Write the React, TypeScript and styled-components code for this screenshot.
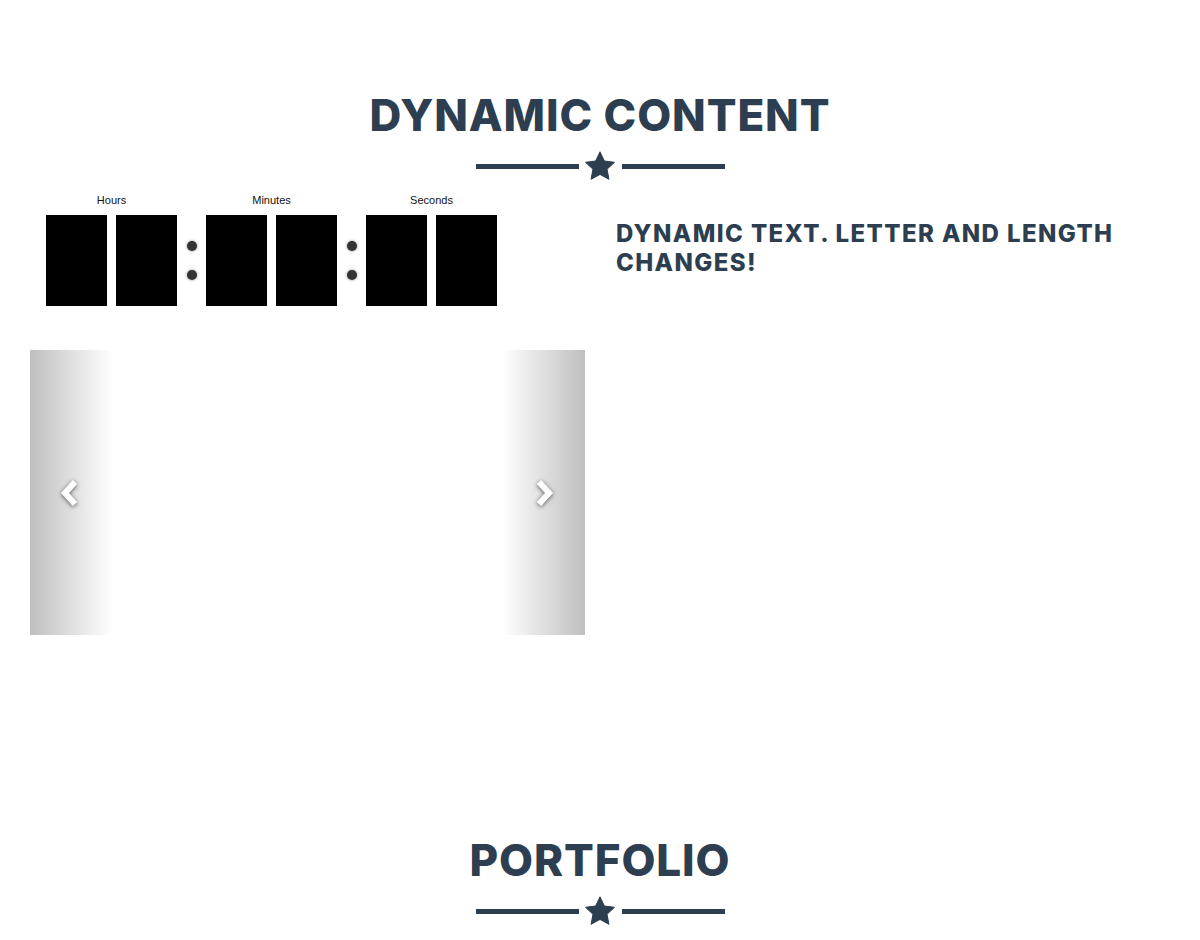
import React from "react";
import styled, { createGlobalStyle } from "styled-components";

const GlobalStyle = createGlobalStyle`
  html, body {
    margin: 0;
    padding: 0;
    background: #ffffff;
  }
  body {
    font-family: Inter, "Open Sans", "DejaVu Sans", sans-serif;
    color: #2c3e50;
  }
  * { box-sizing: border-box; }
`;

const NAVY = "#2c3e50";

const Section = styled.section<{ $top: number; $bottom: number }>`
  padding: ${(p) => p.$top}px 0 ${(p) => p.$bottom}px;
`;

const Container = styled.div`
  width: 1140px;
  margin: 0 auto;
`;

const Title = styled.h2`
  margin: 0;
  font-family: Inter, "Open Sans", sans-serif;
  font-weight: 800;
  font-size: 44px;
  line-height: 48px;
  text-align: center;
  text-transform: uppercase;
  color: ${NAVY};
  letter-spacing: 0.9px;
`;

const Divider = styled.div`
  display: flex;
  justify-content: center;
  align-items: flex-start;
  margin: 12px auto 0;
  height: 29px;
`;

const DividerLine = styled.span`
  display: block;
  width: 103px;
  height: 5px;
  margin-top: 13px;
  background: ${NAVY};
`;

const StarSlot = styled.span`
  display: flex;
  justify-content: center;
  width: 43px;
`;

const starPoints = (() => {
  const pts: string[] = [];
  for (let i = 0; i < 10; i++) {
    const a = -Math.PI / 2 + (i * Math.PI) / 5;
    const rad = i % 2 === 0 ? 15.2 : 7.4;
    pts.push(
      `${(16 + rad * Math.cos(a)).toFixed(2)},${(16 + rad * Math.sin(a)).toFixed(2)}`
    );
  }
  return pts.join(" ");
})();

const StarDivider = () => (
  <Divider>
    <DividerLine />
    <StarSlot>
      <svg width="32" height="30" viewBox="0 0 32 30" aria-hidden="true">
        <polygon
          points={starPoints}
          fill={NAVY}
          stroke={NAVY}
          strokeWidth="1"
          strokeLinejoin="round"
        />
      </svg>
    </StarSlot>
    <DividerLine />
  </Divider>
);

const Row = styled.div<{ $mt: number }>`
  display: grid;
  grid-template-columns: 555px 555px;
  column-gap: 30px;
  margin-top: ${(p) => p.$mt}px;
`;

const Col = styled.div``;

const Countdown = styled.div`
  display: flex;
  align-items: flex-end;
  margin-left: 16px;
`;

const Unit = styled.div`
  display: flex;
  flex-direction: column;
  align-items: center;
`;

const UnitLabel = styled.div`
  font-family: "Liberation Sans", Arial, sans-serif;
  font-size: 11px;
  line-height: 18px;
  margin-top: 1px;
  margin-bottom: 6px;
  color: #111;
`;

const Digits = styled.div`
  display: flex;
  gap: 9px;
`;

const DigitBox = styled.div`
  width: 61px;
  height: 91px;
  background: #000;
`;

const Colon = styled.div`
  width: 29px;
  height: 91px;
  display: flex;
  flex-direction: column;
  align-items: center;
  justify-content: center;
  gap: 19px;
  padding-bottom: 1px;
`;

const Dot = styled.span`
  display: block;
  width: 10px;
  height: 10px;
  border-radius: 50%;
  background: #333;
  box-shadow: 0 0 3px rgba(0, 0, 0, 0.45);
`;

const SubTitle = styled.h3`
  margin: 30px 0 0 1px;
  font-family: Inter, "Open Sans", sans-serif;
  font-weight: 800;
  font-size: 24px;
  line-height: 28.8px;
  letter-spacing: 1.4px;
  text-transform: uppercase;
  color: ${NAVY};
`;

const Carousel = styled.div`
  position: relative;
  height: 285px;
  background: #fff;
  overflow: hidden;
`;

const Control = styled.div<{ $side: "left" | "right" }>`
  position: absolute;
  top: 0;
  bottom: 0;
  ${(p) => p.$side}: 0;
  width: 15%;
  opacity: 0.5;
  background-image: linear-gradient(
    ${(p) => (p.$side === "left" ? "to right" : "to left")},
    rgba(0, 0, 0, 0.5) 0%,
    rgba(0, 0, 0, 0.0001) 100%
  );
`;

const ChevronLayer = styled.div`
  position: absolute;
  inset: 0;
  pointer-events: none;
`;

const ChevronSpot = styled.div<{ $side: "left" | "right" }>`
  position: absolute;
  top: 0;
  bottom: 0;
  ${(p) => p.$side}: 0;
  width: 15%;
`;

const ChevronWrap = styled.div<{ $shift: number }>`
  position: absolute;
  top: 50%;
  left: 50%;
  width: 24px;
  height: 30px;
  margin-top: -15px;
  margin-left: ${(p) => -12 + p.$shift}px;
  display: flex;
  filter: drop-shadow(0 1px 2px rgba(0, 0, 0, 0.6));
`;

const Chevron = ({ dir }: { dir: "left" | "right" }) => (
  <svg width="24" height="30" viewBox="0 0 24 30" aria-hidden="true">
    <path
      d={dir === "left" ? "M17 4 L7 15 L17 26" : "M7 4 L17 15 L7 26"}
      fill="none"
      stroke="#fff"
      strokeWidth="6"
      strokeLinejoin="miter"
    />
  </svg>
);

const units = ["Hours", "Minutes", "Seconds"];

export default function App() {
  return (
    <>
      <GlobalStyle />
      <Section $top={91} $bottom={100}>
        <Container>
          <Title>Dynamic Content</Title>
          <StarDivider />
          <Row $mt={10}>
            <Col>
              <Countdown>
                {units.map((u, i) => (
                  <React.Fragment key={u}>
                    {i > 0 && (
                      <Colon>
                        <Dot />
                        <Dot />
                      </Colon>
                    )}
                    <Unit>
                      <UnitLabel>{u}</UnitLabel>
                      <Digits>
                        <DigitBox />
                        <DigitBox />
                      </Digits>
                    </Unit>
                  </React.Fragment>
                ))}
              </Countdown>
            </Col>
            <Col>
              <SubTitle>Dynamic text. Letter and length changes!</SubTitle>
            </Col>
          </Row>
          <Row $mt={44}>
            <Col>
              <Carousel>
                <Control $side="left" />
                <Control $side="right" />
                <ChevronLayer>
                  <ChevronSpot $side="left">
                    <ChevronWrap $shift={-2}>
                      <Chevron dir="left" />
                    </ChevronWrap>
                  </ChevronSpot>
                  <ChevronSpot $side="right">
                    <ChevronWrap $shift={1}>
                      <Chevron dir="right" />
                    </ChevronWrap>
                  </ChevronSpot>
                </ChevronLayer>
              </Carousel>
            </Col>
            <Col />
          </Row>
        </Container>
      </Section>
      <Section $top={101} $bottom={60}>
        <Container>
          <Title>Portfolio</Title>
          <StarDivider />
        </Container>
      </Section>
    </>
  );
}
